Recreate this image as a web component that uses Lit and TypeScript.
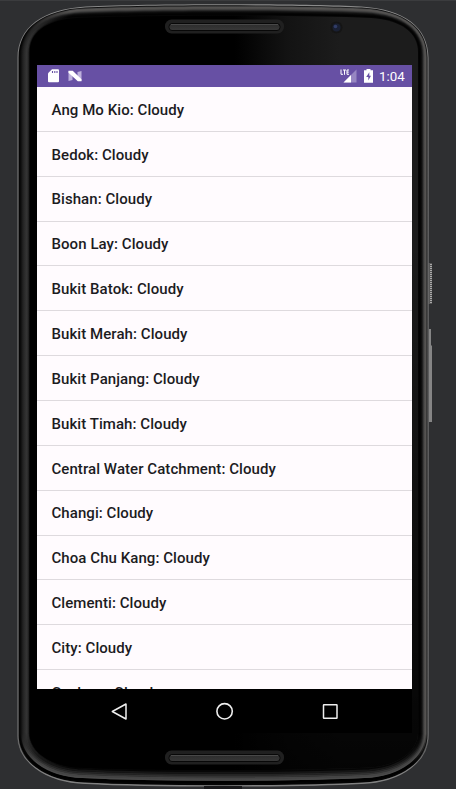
import { LitElement, html, css, svg } from "lit";
import { customElement } from "lit/decorators.js";

const AREAS = [
  "Ang Mo Kio", "Bedok", "Bishan", "Boon Lay", "Bukit Batok", "Bukit Merah", "Bukit Panjang",
  "Bukit Timah", "Central Water Catchment", "Changi", "Choa Chu Kang", "Clementi", "City", "Geylang",
];

// Control points of the casing, from its outer rim to the edge of the glass.
const OUTER = [17.5, 58, 17.5, 27, 43, 9, 86, 6.5, 150, 3.5, 296, 3.5, 361, 6.5, 404, 9, 428.5, 27, 428.5, 58,
  428.5, 735, 428.5, 760, 403, 782, 361, 783.5, 296, 787, 150, 787, 86, 783.5, 43, 782, 17.5, 760, 17.5, 735];
const INNER = [29.5, 52, 29.5, 33, 45, 20, 76, 18, 150, 15, 296, 15, 371, 18, 402, 20, 418, 33, 418, 52,
  418, 733, 418, 750, 400, 765, 371, 767.5, 296, 771, 150, 771, 76, 767.5, 47, 765, 29.5, 750, 29.5, 733];

const points = (t: number) => OUTER.map((v, i) => (v + (INNER[i] - v) * t).toFixed(2));

function casing(t: number): string {
  const p = points(t);
  const s = (from: number, to: number) => p.slice(from, to).join(" ");
  return `M${s(0, 2)}C${s(2, 8)}C${s(8, 14)}C${s(14, 20)}L${s(20, 22)}C${s(22, 28)}C${s(28, 34)}C${s(34, 40)}Z`;
}

function lowerEdge(t: number): string {
  const p = points(t);
  const s = (from: number, to: number) => p.slice(from, to).join(" ");
  return `M${s(20, 22)}C${s(22, 28)}C${s(28, 34)}C${s(34, 40)}`;
}

// Depth, shade on the left side, shade along the top and the right side.
const RIM: [number, string, string][] = [
  [0, "#7e7e7e", "#8a8a8a"], [0.09, "#040404", "#101010"], [0.17, "#060606", "#4a4a4a"],
  [0.25, "#101010", "#565452"], [0.34, "#1a1a1a", "#4c4b4a"], [0.43, "#222", "#3a3a3a"],
  [0.52, "#2a2a2a", "#222"], [0.61, "#313131", "#101010"], [0.7, "#383838", "#060606"],
  [0.8, "#333", "#020202"], [0.92, "#181818", "#060606"],
];

const LOWER: [number, string, number][] = [
  [0.02, "#808080", 1.5], [0.13, "#040404", 2.2], [0.26, "#000", 2.6], [0.4, "#4a4a4a", 2],
  [0.5, "#444", 2], [0.61, "#333", 2], [0.72, "#242424", 2], [0.83, "#151515", 2],
];

@customElement("app-root")
export class AppRoot extends LitElement {
  static styles = css`
    :host { display: block; width: 456px; height: 789px; }
    .stage { position: relative; box-sizing: border-box; width: 456px; height: 789px; padding: 65px 44px 0 37px;
      overflow: hidden; background: #2e2f31; font-family: Roboto, sans-serif; }
    .device { position: absolute; inset: 0; }
    .screen { position: relative; width: 375px; height: 668px; display: flex; flex-direction: column; background: #000; }
    .status { flex: none; height: 22px; display: flex; align-items: center; background: #6750a4; color: #fff; }
    .status svg { display: block; flex: none; }
    .sd { margin-left: 11px; }
    .n { margin-left: 9px; }
    .signal { margin-left: auto; }
    .battery { margin-left: 7px; }
    .time { width: 26px; margin: 1px 7px 0 6px; font-size: 13.3px; line-height: 20px; white-space: nowrap; }
    .list { margin: 0; padding: 0; list-style: none; height: 602px; overflow: hidden; background: #fffbfe; }
    .row { box-sizing: border-box; height: 44.87px; padding: .7px 0 0 14.5px; border-bottom: 1px solid #dedade;
      color: #1c1b1f; font-size: 15px; font-weight: 500; line-height: 45px; letter-spacing: .065px; white-space: nowrap; }
    .nav { flex: 1; display: flex; justify-content: space-around; align-items: center; padding: 0 30px 0 29px; }
  `;

  render() {
    return html`<div class="stage">
      <svg class="device" width="456" height="789" viewBox="0 0 456 789">
        <defs>
          <linearGradient id="glass" gradientUnits="userSpaceOnUse" x1="235" y1="0" x2="340" y2="0">
            <stop stop-color="#000" /><stop offset=".5" stop-color="#131313" /><stop offset="1" stop-color="#1c1c1c" />
          </linearGradient>
          <linearGradient id="fade" x2="0" y2="1">
            <stop offset=".3" stop-color="#000" stop-opacity="0" /><stop offset="1" stop-color="#000" stop-opacity=".85" />
          </linearGradient>
          <linearGradient id="slot" x2="0" y2="1"><stop stop-color="#2b2b2b" /><stop offset="1" stop-color="#383838" /></linearGradient>
          <linearGradient id="rise" gradientUnits="userSpaceOnUse" x1="0" y1="733" x2="0" y2="764"><stop stop-color="#000" /><stop offset="1" stop-color="#fff" /></linearGradient>
          <mask id="lower" maskUnits="userSpaceOnUse" x="0" y="730" width="456" height="59"><rect y="730" width="456" height="59" fill="url(#rise)" /></mask>
          ${RIM.map(([, a, b], i) => svg`<linearGradient id=${`rim${i}`} gradientUnits="userSpaceOnUse" x1="22" y1="0" x2="70" y2="0">
            <stop offset="0" stop-color=${a} /><stop offset="1" stop-color=${b} /></linearGradient>`)}
        </defs>
        <rect width="456" height="1" fill="#3b3c3e" />
        <rect x="428.5" y="263" width="3.5" height="41" fill="#555" />
        <path d="M431 264v39" stroke="#aaa" stroke-width="2" stroke-dasharray="1 1" />
        <path d="M429 329h2v16l1 1v76h-3z" fill="#858585" />
        ${RIM.map(([t], i) => svg`<path d=${casing(t)} fill=${`url(#rim${i})`} />`)}
        <g mask="url(#lower)">${LOWER.map(([t, c, w]) => svg`<path d=${lowerEdge(t)} fill="none" stroke=${c} stroke-width=${w} />`)}</g>
        <path d=${casing(1)} fill="url(#glass)" />
        <path d=${casing(1)} fill="url(#fade)" />
        ${[26.5, 757.5].map((y) => svg`
          <rect x="165" y=${y - 7} width="119" height="14" rx="6.5" fill="#202020" />
          <rect x="169" y=${y - 3} width="111" height="7" rx="3" fill="url(#slot)" stroke="#080808" />
          <path d=${`M171 ${y - 2}h107`} stroke="#484848" />`)}
        <circle cx="336.5" cy="27.5" r="6" fill="#151515" /><circle cx="336.5" cy="27.5" r="4" fill="#1a2033" />
        <circle cx="335.5" cy="26.5" r="1.8" fill="#303c66" />
        <path d="M204 789v-3h38v3z" fill="#18181a" />
      </svg>
      <main class="screen">
        <header class="status">
          <svg class="sd" width="11" height="14" viewBox="0 0 11 14"><path d="M4 .3h6q1 0 1 1v11q0 1-1 1H1q-1 0-1-1V4.3z" fill="#fff" /><path d="M4.5 2v2M6.8 2v2M9 2v2" stroke="#6750a4" stroke-width="1.1" /></svg>
          <svg class="n" width="14" height="12" viewBox="0 0 14 12"><path d="M.5 1v10l4-1V2zM13.5 11V1l-4 1v8z" fill="#bdb1dc" /><path d="M.5 .8h4.2l8.8 8.4v2H9.8L.5 2.8z" fill="#fff" /></svg>
          <svg class="signal" width="17" height="14" viewBox="0 0 17 14"><path d="M16.5.5v13H3.5z" fill="#9786c2" /><path d="M11 6v7.5H3.5z" fill="#fff" /><path d="M1 .5v4.8h2M3 1h3M4.5 1v4.8M9 1H7v4.3h2M7 3.1h1.8" fill="none" stroke="#fff" stroke-width="1" /></svg>
          <svg class="battery" width="9" height="14" viewBox="0 0 9 14"><path d="M2.5 0h4v1.3H9v12.4H0V1.3h2.5z" fill="#fff" /><path d="M5.3 3.3L2.2 8h2.1v3.5L7 6.8H5.3z" fill="#6750a4" /></svg>
          <span class="time">1:04</span>
        </header>
        <ul class="list">${AREAS.map((a) => html`<li class="row">${a}: Cloudy</li>`)}</ul>
        <nav class="nav">
          <svg width="18" height="20" viewBox="0 0 18 20"><path d="M16 3v15L2.3 10.5z" fill="none" stroke="#eee" stroke-width="1.5" stroke-linejoin="round" /></svg>
          <svg width="18" height="18" viewBox="0 0 18 18"><circle cx="8.6" cy="9.3" r="7.7" fill="none" stroke="#eee" stroke-width="1.6" /></svg>
          <svg width="16" height="16" viewBox="0 0 16 16"><rect x="1.5" y="1.7" width="13.5" height="13.5" rx=".5" fill="none" stroke="#eee" stroke-width="1.5" /></svg>
        </nav>
      </main>
    </div>`;
  }
}
